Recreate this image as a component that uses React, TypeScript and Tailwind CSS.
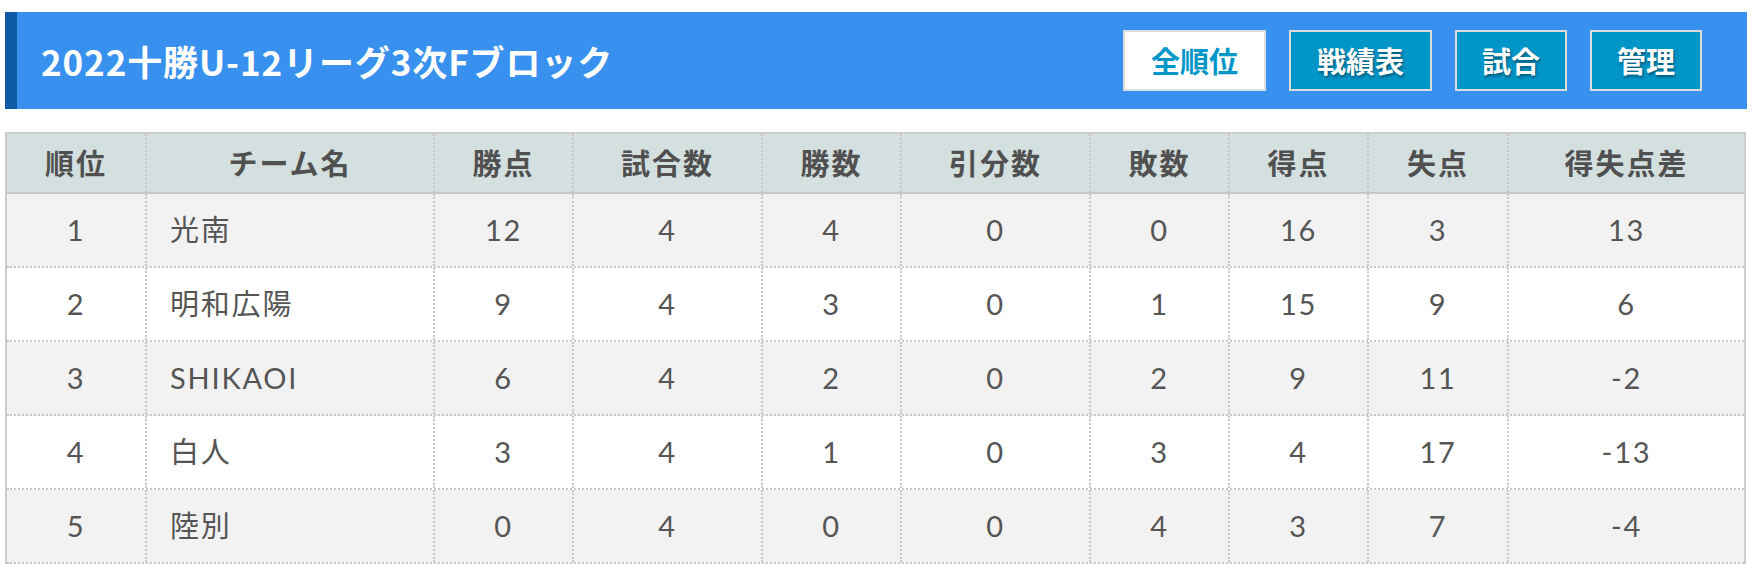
import React from "react";

const headers = ["順位", "チーム名", "勝点", "試合数", "勝数", "引分数", "敗数", "得点", "失点", "得失点差"];
const rows: (string | number)[][] = [
  [1, "光南", 12, 4, 4, 0, 0, 16, 3, 13],
  [2, "明和広陽", 9, 4, 3, 0, 1, 15, 9, 6],
  [3, "SHIKAOI", 6, 4, 2, 0, 2, 9, 11, -2],
  [4, "白人", 3, 4, 1, 0, 3, 4, 17, -13],
  [5, "陸別", 0, 4, 0, 0, 4, 3, 7, -4],
];

const gridCols = "grid grid-cols-[140px_288px_139px_189px_139px_189px_139px_139px_140px_235px]";

export default function App() {
  return (
    <div className="w-[1757px] h-[575px] bg-white pt-[12px] pl-[5px] font-['Lato','Noto_Sans_CJK_JP',sans-serif] text-[#555]">
      <div className="w-[1742px] h-[97px] bg-[#3891ee] border-l-[12px] border-[#0f5aa5] flex items-center justify-between pl-[24px] pr-[45px]">
        <h1 className="font-['Noto_Sans_CJK_JP',sans-serif] font-bold text-white text-[35px] tracking-[0.9px] leading-none">
          2022十勝U-12リーグ3次Fブロック
        </h1>
        <div className="flex gap-[23px] font-['Noto_Sans_CJK_JP',sans-serif] font-bold text-[29px] leading-none">
          <div className="h-[61px] w-[143px] border-2 border-[#dcdcdc] bg-white text-[#0096c8] flex items-center justify-center">全順位</div>
          <div className="h-[61px] w-[143px] border-2 border-[#dcdcdc] bg-[#0096c8] text-white flex items-center justify-center [text-shadow:1px_2px_3px_rgba(0,40,60,0.6)]">戦績表</div>
          <div className="h-[61px] w-[112px] border-2 border-[#dcdcdc] bg-[#0096c8] text-white flex items-center justify-center [text-shadow:1px_2px_3px_rgba(0,40,60,0.6)]">試合</div>
          <div className="h-[61px] w-[112px] border-2 border-[#dcdcdc] bg-[#0096c8] text-white flex items-center justify-center [text-shadow:1px_2px_3px_rgba(0,40,60,0.6)]">管理</div>
        </div>
      </div>

      <div className="mt-[23px] w-[1741px] border-t-2 border-x-2 border-[#cccccc]">
        <div className={`${gridCols} bg-[#d4dfdf] border-b-2 border-[#c8c8c8]`}>
          {headers.map((h, i) => (
            <div
              key={i}
              className={`h-[58px] flex items-center justify-center font-bold text-[29px] tracking-[2px] text-[#505050] font-['Noto_Sans_CJK_JP',sans-serif] ${i < 9 ? "border-r-2 border-dotted border-[#c8c8c8]" : ""}`}
            >
              {h}
            </div>
          ))}
        </div>
        {rows.map((r, ri) => (
          <div key={ri} className={`${gridCols} ${ri % 2 === 0 ? "bg-[#f2f2f2]" : "bg-white"} border-b-2 border-dotted border-[#c8c8c8]`}>
            {r.map((c, ci) => (
              <div
                key={ci}
                className={`h-[72px] flex items-center text-[29px] tracking-[1.8px] ${ci === 1 ? "justify-start pl-[23px]" : "justify-center"} ${ci < 9 ? "border-r-2 border-dotted border-[#c8c8c8]" : ""}`}
              >
                {c}
              </div>
            ))}
          </div>
        ))}
      </div>
    </div>
  );
}
